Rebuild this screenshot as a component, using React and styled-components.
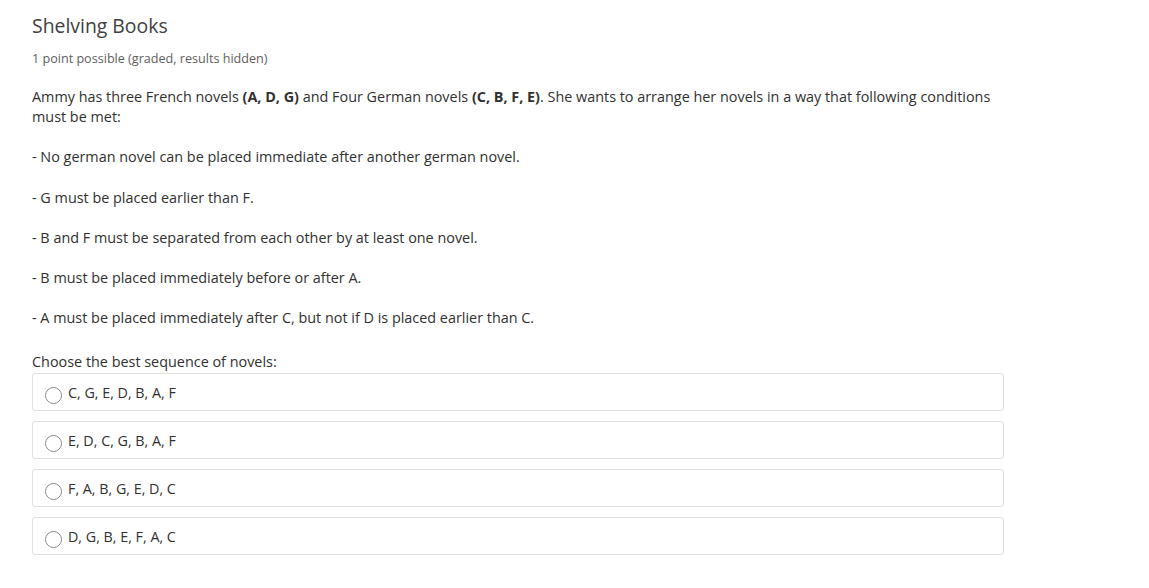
import React from "react";
import styled, { createGlobalStyle } from "styled-components";

const Global = createGlobalStyle`
  html, body { margin: 0; padding: 0; background: #fff; }
  body { font-family: "Open Sans", "Noto Sans", sans-serif; color: #313131; }
`;

const Page = styled.div`
  padding: 12px 32px 0 32px;
  width: 972px;
`;

const Title = styled.h3`
  margin: 0;
  font-size: 19.4px;
  font-weight: 400;
  line-height: 28px;
  color: #414141;
`;

const Meta = styled.div`
  margin-top: 11px;
  font-size: 12.6px;
  line-height: 16px;
  color: #5e5e5e;
`;

const Body = styled.div`
  margin-top: 20px;
  font-size: 14.4px;
  line-height: 20.2px;
  color: #313131;
`;

const Para = styled.p`
  margin: 0 0 20px 0;
`;

const Prompt = styled.p`
  margin: 24px 0 0 0;
  font-size: 14.4px;
  line-height: 20px;
`;

const Options = styled.div`
  margin-top: 1px;
  display: flex;
  flex-direction: column;
  gap: 10px;
`;

const Option = styled.label`
  display: flex;
  align-items: center;
  gap: 6px;
  height: 35px;
  padding: 1px 12px 0 12px;
  border: 1px solid #e0e0e0;
  border-radius: 3px;
  font-size: 14.3px;
  color: #313131;
  cursor: pointer;
`;

const Radio = styled.span`
  width: 15px;
  height: 15px;
  border: 1px solid #8a8a8a;
  border-radius: 50%;
  margin-top: 5px;
  flex: none;
`;

const rules = [
  "- No german novel can be placed immediate after another german novel.",
  "- G must be placed earlier than F.",
  "- B and F must be separated from each other by at least one novel.",
  "- B must be placed immediately before or after A.",
  "- A must be placed immediately after C, but not if D is placed earlier than C.",
];

const choices = [
  "C, G, E, D, B, A, F",
  "E, D, C, G, B, A, F",
  "F, A, B, G, E, D, C",
  "D, G, B, E, F, A, C",
];

export default function App() {
  return (
    <Page>
      <Global />
      <Title>Shelving Books</Title>
      <Meta>1 point possible (graded, results hidden)</Meta>
      <Body>
        <Para>
          Ammy has three French novels <b>(A, D, G)</b> and Four German novels{" "}
          <b>(C, B, F, E)</b>. She wants to arrange her novels in a way that following
          conditions must be met:
        </Para>
        {rules.map((r) => (
          <Para key={r}>{r}</Para>
        ))}
      </Body>
      <Prompt>Choose the best sequence of novels:</Prompt>
      <Options>
        {choices.map((c) => (
          <Option key={c}>
            <Radio />
            {c}
          </Option>
        ))}
      </Options>
    </Page>
  );
}
